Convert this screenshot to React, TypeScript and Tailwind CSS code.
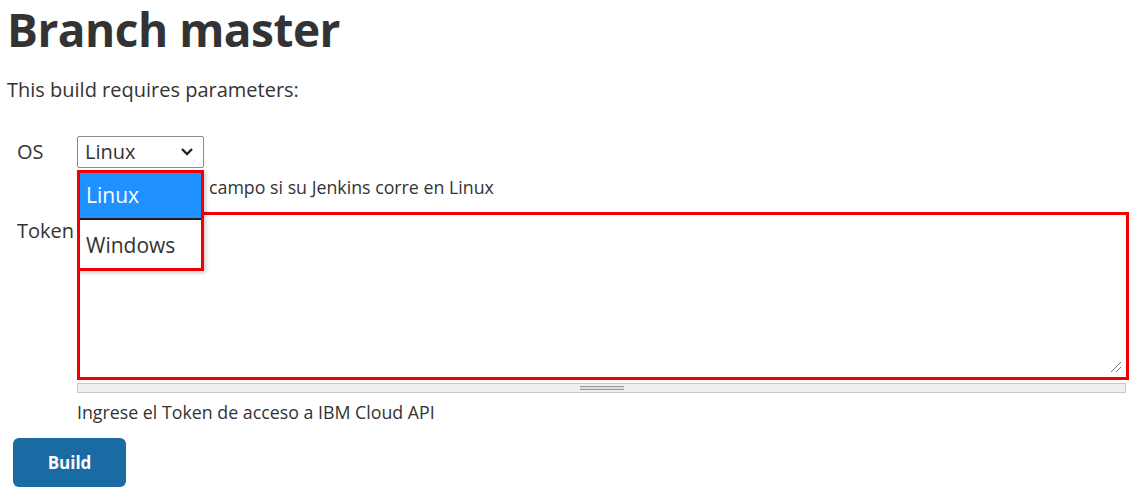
import React from "react";

export default function App() {
  return (
    <div className="relative w-[1137px] h-[498px] bg-white text-[#333] overflow-hidden" style={{ fontFamily: '"Open Sans", "Noto Sans", sans-serif' }}>
      <div className="pl-[7px]">
        <h1 className="text-[46px] font-bold leading-[58px] tracking-[-0.5px] text-[#333]">Branch master</h1>
        <p className="mt-[19px] text-[20px] leading-[26px]">This build requires parameters:</p>
      </div>

      <div className="mt-[33px] pl-[17px] grid grid-cols-[60px_1fr] pr-[8px]">
        <div className="text-[20px] leading-[32px]">OS</div>
        <div>
          <div className="w-[127px] h-[32px] border border-[#8a8a8a] rounded-[2px] flex items-center justify-between pl-[7px] pr-[9px] text-[20px]">
            <span>Linux</span>
            <svg width="14" height="10" viewBox="0 0 14 10"><path d="M2 2 L7 7 L12 2" fill="none" stroke="#222" strokeWidth="2.4" /></svg>
          </div>
          <div className="pl-[132px] mt-[7px] text-[17.8px] leading-[24px]">campo si su Jenkins corre en Linux</div>
        </div>

        <div className="text-[20px] leading-[26px] mt-[19px]">Token</div>
        <div className="mt-[13px]">
          <div className="relative h-[168px] border-[3px] border-[#f00000] bg-white">
            <svg className="absolute right-[4px] bottom-[4px]" width="12" height="12" viewBox="0 0 12 12">
              <path d="M11 1 L1 11 M11 6 L6 11" stroke="#777" strokeWidth="1" />
            </svg>
          </div>
          <div className="mt-[3px] mr-[3px] h-[10px] border border-[#c8c8c8] bg-[#efefef] flex items-center justify-center">
            <div className="w-[44px] h-[4px] border-y border-[#999] bg-[#ddd]" />
          </div>
          <div className="mt-[7px] text-[17.8px] leading-[24px]">Ingrese el Token de acceso a IBM Cloud API</div>
        </div>
      </div>

      <div className="pl-[13px] mt-[14px]">
        <button className="w-[113px] h-[49px] rounded-[6px] bg-[#1a6aa3] text-white text-[17px] font-bold">Build</button>
      </div>

      <div className="absolute left-[77px] top-[170px] w-[127px] h-[101px] border-[3px] border-[#f00000] bg-white shadow-[2px_2px_4px_rgba(0,0,0,0.2)] text-[21px]">
        <div className="h-[47px] bg-[#1e90ff] text-white pl-[6px] leading-[45px] border-b-2 border-[#1b1b2a]">Linux</div>
        <div className="h-[48px] pl-[6px] pt-[3px] leading-[45px] text-[#333]">Windows</div>
      </div>
    </div>
  );
}
